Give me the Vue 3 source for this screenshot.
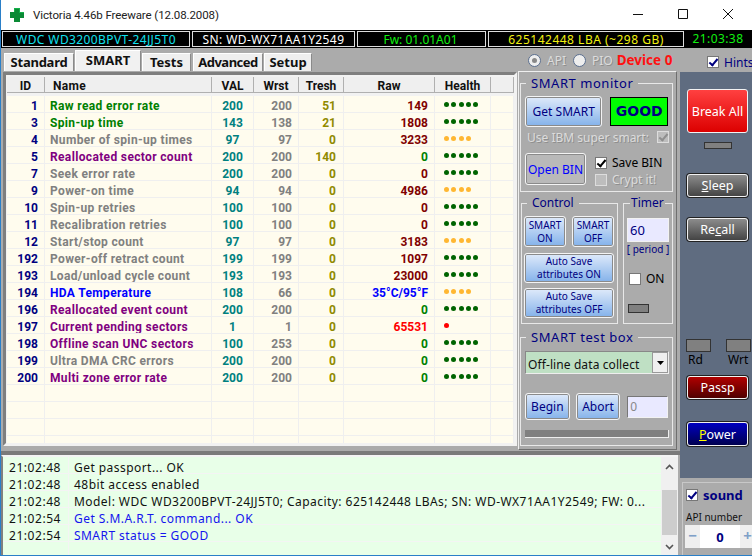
<script setup>
const rows = [
  [1,'Raw read error rate','g',200,200,51,149,'r',5,'g'],
  [3,'Spin-up time','g',143,138,21,1808,'r',5,'g'],
  [4,'Number of spin-up times','x',97,97,0,3233,'r',4,'o'],
  [5,'Reallocated sector count','p',200,200,140,0,'g',5,'g'],
  [7,'Seek error rate','x',200,200,0,0,'r',5,'g'],
  [9,'Power-on time','x',94,94,0,4986,'r',4,'o'],
  [10,'Spin-up retries','x',100,100,0,0,'r',5,'g'],
  [11,'Recalibration retries','x',100,100,0,0,'r',5,'g'],
  [12,'Start/stop count','x',97,97,0,3183,'r',4,'o'],
  [192,'Power-off retract count','x',199,199,0,1097,'r',5,'g'],
  [193,'Load/unload cycle count','x',193,193,0,23000,'r',5,'g'],
  [194,'HDA Temperature','b',108,66,0,'35°C/95°F','b',4,'o'],
  [196,'Reallocated event count','p',200,200,0,0,'g',5,'g'],
  [197,'Current pending sectors','p',1,1,0,65531,'e',1,'e'],
  [198,'Offline scan UNC sectors','p',100,253,0,0,'g',5,'g'],
  [199,'Ultra DMA CRC errors','x',200,200,0,0,'g',5,'g'],
  [200,'Multi zone error rate','p',200,200,0,0,'g',5,'g'],
  [],[],[],[]
]
const logs = [
  ['21:02:48','Get passport... OK',''],
  ['21:02:48','48bit access enabled',''],
  ['21:02:48','Model: WDC WD3200BPVT-24JJ5T0; Capacity: 625142448 LBAs; SN: WD-WX71AA1Y2549; FW: 0...',''],
  ['21:02:54','Get S.M.A.R.T. command... OK','info'],
  ['21:02:54','SMART status = GOOD','info'],
  ['','','']
]
</script>

<template>
  <div class="window">
    <header class="titlebar">
      <svg class="logo" width="16" height="16" viewBox="0 0 16 16"><path d="M5 1h6v4h4v6h-4v4H5v-4H1V5h4z" fill="#0a8a35"/><path d="M5 1h6v4h4v1H10V2H6v3H5z" fill="#14b04a"/></svg>
      <span class="title">Victoria 4.46b Freeware (12.08.2008)</span>
      <div class="winbtns">
        <svg width="12" height="12" viewBox="0 0 12 12"><path d="M1 6.5h10" stroke="#111" fill="none"/></svg>
        <svg width="12" height="12" viewBox="0 0 12 12"><path d="M1.5 1.5h9v9h-9z" stroke="#111" fill="none"/></svg>
        <svg width="12" height="12" viewBox="0 0 12 12"><path d="M1 1l10 10M11 1L1 11" stroke="#111" fill="none"/></svg>
      </div>
    </header>

    <div class="infobar">
      <span class="cell c-model">WDC WD3200BPVT-24JJ5T0</span>
      <span class="cell c-sn">SN: WD-WX71AA1Y2549</span>
      <span class="cell c-fw">Fw: 01.01A01</span>
      <span class="cell c-lba">625142448 LBA (~298 GB)</span>
      <span class="clock">21:03:38</span>
    </div>

    <div class="body">
      <div class="main">
        <div class="tabs">
          <span class="tab t1">Standard</span>
          <span class="tab active">SMART</span>
          <span class="tab t3">Tests</span>
          <span class="tab t4">Advanced</span>
          <span class="tab t5">Setup</span>
          <span class="modes">
            <i class="radio on"></i><span class="dis">API</span>
            <i class="radio r2"></i><span class="dis">PIO</span>
            <b class="device">Device 0</b>
          </span>
        </div>

        <div class="panels">
          <div class="tablepanel">
            <div class="hdr">
              <span class="h id">ID</span><span class="h name">Name</span><span class="h val">VAL</span><span class="h wrst">Wrst</span><span class="h tresh">Tresh</span><span class="h raw">Raw</span><span class="h health">Health</span><span class="h end"></span>
            </div>
            <div class="grid">
              <div v-for="(r,i) in rows" :key="i" class="row">
                <span class="td id">{{ r[0] }}</span>
                <span class="td name" :class="'n-'+r[2]">{{ r[1] }}</span>
                <span class="td val">{{ r[3] }}</span>
                <span class="td wrst">{{ r[4] }}</span>
                <span class="td tresh">{{ r[5] }}</span>
                <span class="td raw" :class="'n-'+r[7]">{{ r[6] }}</span>
                <span class="td health"><i v-for="d in (r[8]||0)" :key="d" class="dot" :class="'d-'+r[9]"></i></span>
                <span class="td end"></span>
              </div>
            </div>
          </div>

          <aside class="ctlpanel">
            <fieldset class="fs monitor">
              <legend class="wide">SMART monitor</legend>
              <div class="line">
                <button class="btn blue getsmart">Get SMART</button>
                <span class="good">GOOD</span>
              </div>
              <div class="ibm"><span class="dis">Use IBM super smart:</span><i class="check dim on2"></i></div>
              <div class="line open">
                <button class="btn grey openbin">Open BIN</button>
                <div class="checks">
                  <label><i class="check on black"></i><span>Save BIN</span></label>
                  <label><i class="check dim"></i><span class="dis">Crypt it!</span></label>
                </div>
              </div>
            </fieldset>
            <div class="mid">
              <fieldset class="fs control">
                <legend>Control</legend>
                <div class="pair">
                  <button class="btn blue sm">SMART<br>ON</button>
                  <button class="btn blue sm">SMART<br>OFF</button>
                </div>
                <button class="btn blue auto a1">Auto Save<br>attributes ON</button>
                <button class="btn blue auto a2">Auto Save<br>attributes OFF</button>
              </fieldset>
              <fieldset class="fs timer">
                <legend>Timer</legend>
                <div class="tinput">60</div>
                <div class="period">[ period ]</div>
                <label class="ton"><i class="check"></i><span>ON</span></label>
                <i class="led tled"></i>
              </fieldset>
            </div>
            <fieldset class="fs testbox">
              <legend class="wide">SMART test box</legend>
              <div class="select"><span>Off-line data collect</span><i class="drop"><svg width="7" height="4" viewBox="0 0 7 4"><path d="M0 0h7L3.5 4z" fill="#000"/></svg></i></div>
              <div class="line begin">
                <button class="btn blue bb">Begin</button>
                <button class="btn blue bb">Abort</button>
                <div class="num">0</div>
              </div>
              <div class="progress"></div>
            </fieldset>
          </aside>
        </div>

        <div class="splitter"></div>

        <div class="log">
          <div class="logrows">
            <div v-for="(l,i) in logs" :key="i" class="lrow">
              <span class="ltime">{{ l[0] }}</span>
              <span class="lmsg" :class="l[2]">{{ l[1] }}</span>
            </div>
          </div>
          <div class="scroll">
            <svg width="9" height="6" viewBox="0 0 9 6"><path d="M1 5l3.5-3.5L8 5" stroke="#555" stroke-width="1.6" fill="none"/></svg>
            <i class="thumb"></i>
            <svg width="9" height="6" viewBox="0 0 9 6"><path d="M1 1l3.5 3.5L8 1" stroke="#555" stroke-width="1.6" fill="none"/></svg>
          </div>
        </div>
      </div>

      <aside class="side">
        <div class="sidetop">
          <label class="hints"><i class="check on"></i><span>Hints</span></label>
        </div>
        <div class="slate">
          <button class="big break">Break All</button>
          <i class="led sl1"></i>
          <button class="big dark sleep"><u>S</u>leep</button>
          <button class="big dark recall">Re<u>c</u>all</button>
          <div class="rw">
            <div class="rwi"><i class="led"></i><span>Rd</span></div>
            <div class="rwi"><i class="led"></i><span>Wrt</span></div>
          </div>
          <button class="big passp">Passp</button>
          <button class="big power"><u>P</u>ower</button>
        </div>
        <div class="bottom">
          <div class="binner">
            <label class="sound"><i class="check on"></i><b>sound</b></label>
            <div class="apil">API number</div>
            <div class="spin"><span class="pm">−</span><b>0</b><span class="pm">+</span></div>
          </div>
        </div>
      </aside>
    </div>
  </div>
</template>

<style>
html, body { margin: 0; padding: 0; overflow: hidden; background: #fff; }
</style>

<style scoped>
* { box-sizing: border-box; }
.window {
  width: 752px; height: 556px; overflow: hidden; display: flex; flex-direction: column;
  background: #ababab; border-left: 1px solid #2a7fc8; border-bottom: 1px solid #2a7fc8;
  font-family: "Noto Sans", "DejaVu Sans", sans-serif; font-size: 12px; color: #000;
}
button { font-family: inherit; cursor: default; padding: 0; }
i { display: block; font-style: normal; }
.titlebar { height: 30px; background: #fff; display: flex; align-items: center; padding-left: 8px; flex: none; }
.logo { margin-right: 8px; margin-top: -1px; }
.title { font-family: Roboto, sans-serif; font-size: 11.5px; letter-spacing: -.1px; color: #222; margin-top: -1px; }
.winbtns { margin-left: auto; display: flex; gap: 33px; margin-right: 18px; margin-top: -2px; }

.infobar { height: 18px; background: #000; flex: none; display: flex; padding: 1px 0 1px 1px; gap: 2px; font-size: 12px; line-height: 15px; letter-spacing: .4px; }
.cell { height: 16px; border: 1px solid #ddd; text-align: center; display: block; }
.c-model { width: 188px; color: #10e0ef; }
.c-sn { width: 163px; color: #fff; }
.c-fw { width: 129px; color: #10f010; letter-spacing: 0; padding-right: 2px; }
.c-lba { width: 196px; color: #f0f010; letter-spacing: .5px; }
.clock { color: #10f010; flex: 1; text-align: center; padding: 0 2px 0 0; }

.body { flex: 1; display: flex; min-height: 0; }
.main { width: 679px; flex: none; display: flex; flex-direction: column; }

.tabs { height: 23px; flex: none; display: flex; align-items: flex-end; padding-left: 3px; font-weight: 700; font-size: 13px; position: relative; }
.tab { height: 18px; line-height: 17px; background: #efefef; border: 1px solid #fff; border-right-color: #8a8a8a; border-bottom: 0; text-align: center; color: #111; }
.t1 { width: 70px; letter-spacing: -.25px; }
.active { width: 66px; height: 21px; line-height: 18px; background: #f1f1f1; margin: 0 1px 0 1px; }
.t3 { width: 49px; }
.t4 { width: 70px; margin-left: 2px; letter-spacing: -.5px; }
.t5 { width: 48px; margin-left: 1px; }
.modes { position: absolute; left: 527px; top: 3px; display: flex; align-items: center; font-weight: 400; font-size: 12px; height: 18px; white-space: nowrap; }
.dis { color: #dcdcdc; text-shadow: 1px 1px 0 #8f8f8f; }
.modes .dis { margin-left: 6px; }
.r2 { margin-left: 7px; }
.device { color: #f11; font-size: 13.5px; margin-left: 4px; font-weight: 700; }
.radio { width: 13px; height: 13px; border-radius: 50%; background: #eee; border: 1px solid #5b6f8f; position: relative; flex: none; }
.radio.on::after { content: ""; position: absolute; inset: 3px; border-radius: 50%; background: #888; }

.panels { display: flex; height: 379px; flex: none; }
.tablepanel { margin: 1px 0 0 2px; width: 514px; height: 374px; flex: none; border: 3px solid; border-color: #7f7f7f #f2f2f2 #f2f2f2 #7f7f7f; background: #f2f2f2; padding: 2px 0 0 1px; overflow: hidden; }
.hdr, .row { display: grid; grid-template-columns: 38px 167px 42px 45px 45px 91px 56px 1fr; }
.hdr { height: 16px; font-family: Roboto, sans-serif; font-weight: 700; font-size: 12px; line-height: 19px; margin-bottom: 3px; background: #efefef; }
.h { border-right: 1px solid #b0b0b0; border-bottom: 1px solid #b0b0b0; text-align: center; color: #111; overflow: hidden; }
.h.name { text-align: left; padding-left: 8px; letter-spacing: .3px; }
.grid { background: #fffcee; }
.row { height: 17px; font-family: Roboto, sans-serif; font-weight: 700; font-size: 12px; line-height: 20px; }
.td { border-right: 1px solid #efefef; border-bottom: 1px solid #efefef; white-space: nowrap; overflow: hidden; }
.td.id { text-align: right; padding-right: 6px; color: #000080; }
.td.name { padding-left: 5px; letter-spacing: .35px; }
.td.val { text-align: center; color: #008080; }
.td.wrst { text-align: right; padding-right: 6px; color: #808080; }
.td.tresh { text-align: right; padding-right: 7px; color: #908a00; }
.td.raw { text-align: right; padding-right: 6px; }
.n-g { color: #008000; }
.n-x { color: #808080; }
.n-p { color: #800080; }
.n-b { color: #0000ff; }
.n-r { color: #800000; }
.n-e { color: #ff0000; }
.td.health { display: flex; align-items: center; gap: 2.25px; padding-left: 9px; }
.dot { width: 5px; height: 5px; border-radius: 50%; }
.d-g { background: #006400; }
.d-o { background: #ffb732; }
.d-e { background: #ff0000; }

.ctlpanel { width: 159px; height: 379px; margin-left: 1px; flex: none; border: 1px solid; border-color: #efefef #6f6f6f #6f6f6f #efefef; padding: 3px 0 0 1px; }
.fs { border: 1px solid #e8e8e8; margin: 0; padding: 0 4px; position: relative; min-width: 0; }
legend { color: #000080; font-size: 12px; padding: 0 5px; margin-left: 3px; line-height: 16px; }
legend.wide { letter-spacing: .55px; font-size: 13px; margin-left: 1px; }
.line { display: flex; }
.check { width: 12px; height: 12px; background: #fff; border: 1px solid #777; position: relative; flex: none; }
.check.on::after { content: ""; position: absolute; left: 3px; top: 0; width: 3px; height: 7px; border: solid #000080; border-width: 0 2px 2px 0; transform: rotate(40deg); }
.check.black::after { border-color: #000; }
.check.dim { background: #bdbdbd; border-color: #ddd; }
.check.on2::after { content: ""; position: absolute; left: 3px; top: 0; width: 3px; height: 7px; border: solid #8e8e8e; border-width: 0 2px 2px 0; transform: rotate(40deg); }

.btn { border: 1px solid #f4f4f4; box-shadow: inset 0 0 0 1px #8a8a8a; font-size: 12px; color: #000080; border-radius: 3px; }
.blue { background: linear-gradient(#dfeafa, #84b2ea); }
.grey { background: #b9b9b9; }

.monitor { height: 117px; width: 153px; }
.getsmart { width: 78px; height: 31px; margin-top: 5px; font-size: 12px; }
.good { width: 58px; height: 29px; background: #0f0; border: 1px solid #000; color: #000080; font-weight: 700; font-size: 14px; line-height: 26px; text-align: center; margin: 6px 0 0 8px; font-family: "DejaVu Sans", sans-serif; }
.ibm { display: flex; justify-content: space-between; align-items: center; margin-top: 3px; height: 14px; width: 144px; padding-left: 2px; }
.open { margin-top: 9px; }
.openbin { width: 61px; height: 32px; color: #00f; font-size: 12px; }
.checks { margin-left: 9px; padding-top: 1px; display: flex; flex-direction: column; }
.checks label { display: flex; align-items: center; gap: 5px; height: 17px; }

.mid { display: flex; gap: 5px; margin: 3px 0 0 1px; }
.control { width: 97px; height: 129px; padding: 0 2px; }
.pair { display: flex; justify-content: space-between; margin-top: 5px; width: 90px; }
.sm { width: 42px; height: 31px; font-size: 10px; line-height: 13px; }
.auto { width: 90px; height: 30px; font-size: 10px; line-height: 13px; display: block; }
.a1 { margin-top: 6px; }
.a2 { margin-top: 5px; }
.timer { width: 50px; height: 129px; padding: 0; }
.timer legend { padding: 0 1px; margin-left: 6px; }
.tinput { width: 42px; height: 24px; margin: 7px 0 0 3px; background: #e9e9ff; border: 1px solid #f2f2f2; color: #000080; font-size: 13px; padding-left: 2px; line-height: 22px; }
.period { font-size: 10px; text-align: center; margin-top: 1px; line-height: 13px; color: #000080; white-space: nowrap; }
.ton { display: flex; align-items: center; gap: 5px; margin: 14px 0 0 5px; color: #000; }
.led { background: #808080; border: 1px solid #333; }
.tled { width: 21px; height: 9px; margin: 17px 0 0 4px; }

.testbox { height: 117px; width: 153px; margin-top: 5px; }
.select { height: 23px; width: 144px; margin-top: 6px; background: #bfe0c4; border: 1px solid; border-color: #888 #eee #eee #888; display: flex; justify-content: space-between; font-size: 12px; letter-spacing: .1px; color: #111; padding-left: 2px; }
.select span { line-height: 25px; }
.drop { width: 16px; background: #efefef; border: 1px solid #999; display: flex; align-items: center; justify-content: center; }
.begin { margin-top: 19px; gap: 6px; }
.bb { width: 45px; height: 27px; font-size: 12px; }
.num { width: 41px; height: 22px; margin: 3px 0 0 1px; background: #e9e9ff; border: 1px solid; border-color: #777 #f2f2f2 #f2f2f2 #777; color: #888; padding-left: 2px; line-height: 20px; }
.progress { height: 8px; width: 144px; margin-top: 10px; background: #808080; border-bottom: 1px solid #eee; border-right: 1px solid #eee; }

.splitter { height: 5px; flex: none; background: #ababab; border-bottom: 4px solid #7a7a7a; }
.log { flex: 1; display: flex; min-height: 0; background: #e8ffe8; border-left: 2px solid #808080; border-top: 2px solid #f4f4f4; margin-right: 2px; }
.logrows { flex: 1; min-width: 0; }
.lrow { display: flex; height: 17px; border-bottom: 1px solid #f4f4f4; font-size: 12px; color: #111; }
.ltime { width: 66px; padding: 1px 0 0 6px; line-height: 20px; border-right: 1px solid #f4f4f4; flex: none; letter-spacing: .55px; }
.lmsg { padding: 1px 0 0 5px; line-height: 20px; white-space: nowrap; letter-spacing: .45px; }
.lmsg.info { color: #1414ee; }
.scroll { width: 17px; flex: none; background: #f0f0f0; display: flex; flex-direction: column; align-items: center; justify-content: space-between; padding: 7px 0 5px; }
.thumb { width: 15px; height: 45px; background: #cdcdcd; margin-top: 10px; }

.side { flex: 1; display: flex; flex-direction: column; min-width: 0; }
.sidetop { height: 24px; flex: none; padding: 8px 0 0 27px; }
.hints { display: flex; gap: 5px; align-items: center; color: #000080; white-space: nowrap; height: 12px; }
.slate { height: 406px; background: #5f6c80; flex: none; padding: 17px 0 0 7px; }
.big { width: 61px; display: block; border: 1px solid #f2f2f2; border-radius: 3px; box-shadow: 0 0 0 1px #222; font-size: 12.5px; color: #fff; }
.break { height: 44px; background: linear-gradient(#ff4040, #dc0000); box-shadow: none; }
.sl1 { width: 28px; height: 7px; margin: 9px 0 0 17px; }
.dark { height: 23px; background: linear-gradient(#8c8c8c, #444); }
.sleep { margin-top: 25px; }
.recall { margin-top: 21px; }
.rw { display: flex; gap: 15px; margin: 98px 0 0 -1px; }
.rwi { width: 25px; color: #000; font-size: 12px; line-height: 14px; flex: none; }
.rwi .led { height: 13px; width: 25px; margin-bottom: 1px; }
.rwi span { padding-left: 2px; white-space: nowrap; }
.passp { height: 23px; margin-top: 9px; background: linear-gradient(#b00000, #500000); }
.power { height: 24px; margin-top: 23px; background: linear-gradient(#0000c0, #000050); }
.power u { color: #ff0; }
.bottom { flex: 1; padding: 4px 0 0 2px; background: #ababab; }
.binner { height: 100%; border: solid #c8c8c8; border-width: 1px 0 0 1px; padding: 6px 0 0 3px; }
.sound { display: flex; align-items: center; gap: 5px; color: #000080; font-size: 13px; height: 12px; }
.apil { font-size: 10px; line-height: 14px; color: #111; margin-top: 9px; white-space: nowrap; }
.spin { display: flex; width: 70px; height: 23px; background: #fff; margin: 1px 0 0 -1px; align-items: center; color: #000080; font-size: 13px; }
.spin b { flex: 1; text-align: center; }
.pm { width: 15px; height: 23px; background: #efefef; color: #7fa0c8; text-align: center; line-height: 21px; font-size: 15px; font-weight: 700; }
</style>
